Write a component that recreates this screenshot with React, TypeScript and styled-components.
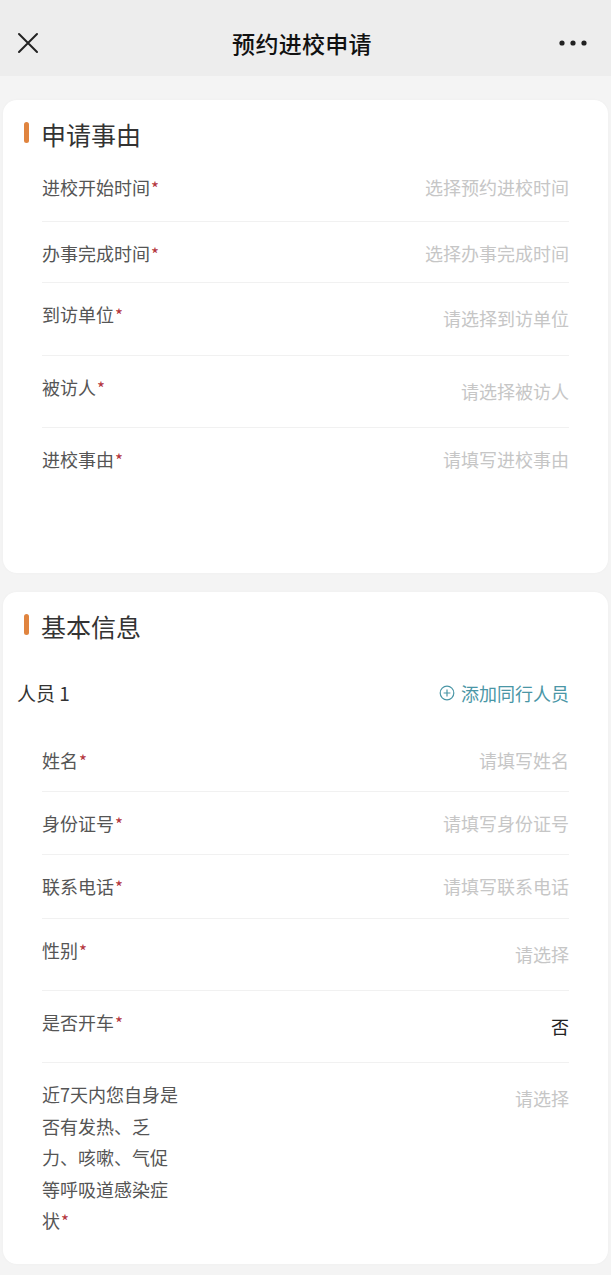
import React, {FC} from "react";
import styled, {createGlobalStyle} from "styled-components";

const GlobalStyle = createGlobalStyle`
  html, body {
    margin: 0;
    padding: 0;
    background: #f4f4f4;
  }
  body {
    font-family: "Noto Sans CJK SC", "Noto Sans", sans-serif;
    color: #333;
  }
`

interface FieldItem {
    label: string
    value: string
    filled?: boolean
    h: number
    offset?: number
    last?: boolean
}

const reasonFields: FieldItem[] = [
    {label: "进校开始时间", value: "选择预约进校时间", h: 66},
    {label: "办事完成时间", value: "选择办事完成时间", h: 61},
    {label: "到访单位", value: "请选择到访单位", h: 73, offset: 4},
    {label: "被访人", value: "请选择被访人", h: 72, offset: 4},
    {label: "进校事由", value: "请填写进校事由", h: 145, last: true},
]

const infoFields: FieldItem[] = [
    {label: "姓名", value: "请填写姓名", h: 63},
    {label: "身份证号", value: "请填写身份证号", h: 63},
    {label: "联系电话", value: "请填写联系电话", h: 64},
    {label: "性别", value: "请选择", h: 72, offset: 4},
    {label: "是否开车", value: "否", filled: true, h: 72, offset: 4},
    {label: "近7天内您自身是否有发热、乏力、咳嗽、气促等呼吸道感染症状", value: "请选择", h: 201, offset: 4, last: true},
]

const CloseIcon = () => (
    <svg width="22" height="22" viewBox="0 0 22 22">
        <path d="M2 2 L20 20 M20 2 L2 20" stroke="#222" strokeWidth="2" strokeLinecap="round"/>
    </svg>
)

const MoreIcon = () => (
    <svg width="28" height="8" viewBox="0 0 28 8">
        <circle cx="3" cy="4" r="2.6" fill="#222"/>
        <circle cx="14" cy="4" r="2.6" fill="#222"/>
        <circle cx="25" cy="4" r="2.6" fill="#222"/>
    </svg>
)

const PlusCircle = () => (
    <svg width="16" height="16" viewBox="0 0 16 16">
        <circle cx="8" cy="8" r="6.8" fill="none" stroke="#4a96a6" strokeWidth="1.2"/>
        <path d="M8 4.6 V11.4 M4.6 8 H11.4" stroke="#4a96a6" strokeWidth="1.2"/>
    </svg>
)

const Field: FC<{item: FieldItem}> = ({item}) => (
    <StyledRow $h={item.h} $last={item.last}>
        <Label>
            {item.label}<Star>*</Star>
        </Label>
        <Value $filled={item.filled} $offset={item.offset ?? 0}>{item.value}</Value>
    </StyledRow>
)

const App: FC = () => {
    return (
        <Page>
            <GlobalStyle/>
            <NavBar>
                <NavSide><CloseIcon/></NavSide>
                <NavTitle>预约进校申请</NavTitle>
                <NavSide $right><MoreIcon/></NavSide>
            </NavBar>
            <Body>
                <Card>
                    <SectionTitle>申请事由</SectionTitle>
                    <FieldList>
                        {reasonFields.map(f => <Field key={f.label} item={f}/>)}
                    </FieldList>
                </Card>
                <Card>
                    <SectionTitle>基本信息</SectionTitle>
                    <PersonRow>
                        <PersonName>人员 1</PersonName>
                        <AddLink><PlusCircle/>添加同行人员</AddLink>
                    </PersonRow>
                    <FieldList>
                        {infoFields.map(f => <Field key={f.label} item={f}/>)}
                    </FieldList>
                </Card>
            </Body>
        </Page>
    )
}

const Page = styled.div`
  width: 611px;
  min-height: 1275px;
  background: #f4f4f4;
`
const NavBar = styled.div`
  height: 76px;
  box-sizing: border-box;
  padding: 10px 24px 0 17px;
  display: flex;
  align-items: center;
  justify-content: space-between;
  background: #ededed;
`
const NavSide = styled.div<{$right?: boolean}>`
  width: 60px;
  display: flex;
  justify-content: ${({$right}) => $right ? "flex-end" : "flex-start"};
  align-items: center;
`
const NavTitle = styled.div`
  font-size: 23px;
  font-weight: 500;
  color: #111;
  letter-spacing: 0.3px;
`
const Body = styled.div`
  padding: 24px 3px 12px;
  display: flex;
  flex-direction: column;
  gap: 19px;
`
const Card = styled.div`
  background: #fff;
  border-radius: 14px;
  padding: 19px 39px 0 39px;
  box-shadow: 0 0 3px rgba(0, 0, 0, 0.03);
`
const SectionTitle = styled.div`
  position: relative;
  height: 30px;
  line-height: 30px;
  font-size: 25px;
  color: #333;
  margin-bottom: 7px;
  margin-left: -1px;
  &::before {
    content: "";
    position: absolute;
    left: -17px;
    top: 3px;
    width: 5px;
    height: 21px;
    border-radius: 3px;
    background: #e0843f;
  }
`
const FieldList = styled.div`
  display: flex;
  flex-direction: column;
`
const StyledRow = styled.div<{$h: number, $last?: boolean}>`
  height: ${({$h}) => $h}px;
  box-sizing: border-box;
  display: flex;
  justify-content: space-between;
  align-items: flex-start;
  padding-top: 16px;
  border-bottom: ${({$last}) => $last ? "none" : "1px solid #f1f1f1"};
`
const Label = styled.div`
  width: 140px;
  font-size: 18px;
  line-height: 31.5px;
  color: #555;
  line-break: strict;
`
const Star = styled.span`
  color: #b3343c;
  font-size: 17px;
  margin-left: 1px;
`
const Value = styled.div<{$filled?: boolean, $offset: number}>`
  font-size: 18px;
  line-height: 31.5px;
  margin-top: ${({$offset}) => $offset}px;
  color: ${({$filled}) => $filled ? "#222" : "#c6c6c6"};
  text-align: right;
`
const PersonRow = styled.div`
  display: flex;
  justify-content: space-between;
  align-items: center;
  margin-left: -25px;
  padding: 31px 0 22px;
`
const PersonName = styled.div`
  font-size: 19px;
  line-height: 28px;
  color: #333;
`
const AddLink = styled.div`
  display: flex;
  align-items: center;
  gap: 6px;
  font-size: 18px;
  line-height: 28px;
  color: #4a96a6;
`

export default App
